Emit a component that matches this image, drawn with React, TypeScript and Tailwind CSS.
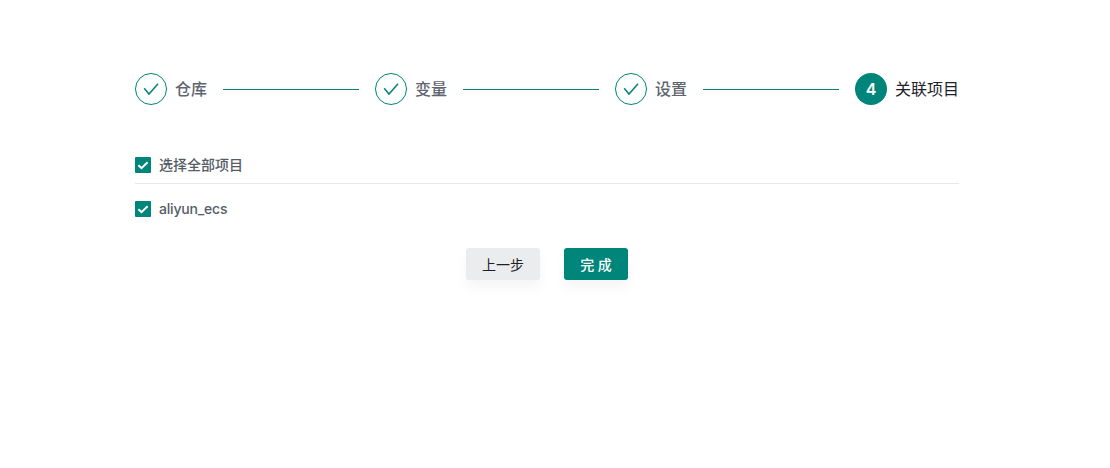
import { Fragment, useState } from 'react';

const steps = ['仓库', '变量', '设置', '关联项目'];
const projects = ['aliyun_ecs'];

function StepCheck() {
  return (
    <svg
      viewBox="0 0 16 16"
      className="size-4"
      fill="none"
      stroke="#00857a"
      strokeWidth="1.5"
      aria-hidden="true"
    >
      <path d="M1.2 7.2 6 13 15 2.7" />
    </svg>
  );
}

function Steps({ current }: { current: number }) {
  return (
    <ol className="flex h-8 items-center">
      {steps.map((label, index) => (
        <Fragment key={label}>
          {index > 0 && <li aria-hidden="true" className="mx-4 h-px flex-1 bg-[#00857a]" />}
          <li className="flex items-center gap-2">
            {index < current ? (
              <span className="flex size-8 items-center justify-center rounded-full border border-[#00857a]">
                <StepCheck />
              </span>
            ) : (
              <span className="flex size-8 items-center justify-center rounded-full bg-[#00857a] font-['Inter'] text-base font-semibold text-white">
                {index + 1}
              </span>
            )}
            <span
              className={
                index < current
                  ? 'text-base leading-8 font-medium text-[#5f6570]'
                  : 'text-base leading-8 text-[#1d2129]'
              }
            >
              {label}
            </span>
          </li>
        </Fragment>
      ))}
    </ol>
  );
}

type CheckboxProps = { label: string; checked: boolean; onChange: () => void };

function Checkbox({ label, checked, onChange }: CheckboxProps) {
  return (
    <label className="flex cursor-pointer items-center gap-2 text-sm leading-[22px] font-medium text-[#555c66]">
      <input type="checkbox" className="sr-only" checked={checked} onChange={onChange} />
      <span
        className={
          checked
            ? 'flex size-4 items-center justify-center rounded-[1px] bg-[#00857a]'
            : 'flex size-4 rounded-[1px] border border-gray-300 bg-white'
        }
      >
        {checked && (
          <svg viewBox="0 0 16 16" className="size-4" fill="none" stroke="white" strokeWidth="2">
            <path d="M3.4 8.2 6.5 11.1 12.6 5.2" />
          </svg>
        )}
      </span>
      <span>{label}</span>
    </label>
  );
}

export default function App() {
  const [selected, setSelected] = useState<string[]>(projects);
  const allSelected = selected.length === projects.length;
  const toggle = (name: string) =>
    setSelected((list) => (list.includes(name) ? list.filter((n) => n !== name) : [...list, name]));

  return (
    <main className="min-h-[468px] bg-white pt-[73px] pl-[135px] font-['Inter','Noto_Sans_CJK_SC',sans-serif]">
      <div className="w-[824px]">
        <Steps current={3} />
        <div className="mt-[49px] border-b border-[#e8e8ea] pb-[7px]">
          <Checkbox
            label="选择全部项目"
            checked={allSelected}
            onChange={() => setSelected(allSelected ? [] : projects)}
          />
        </div>
        <div className="mt-[14px] tracking-[-0.2px]">
          {projects.map((name) => (
            <Checkbox
              key={name}
              label={name}
              checked={selected.includes(name)}
              onChange={() => toggle(name)}
            />
          ))}
        </div>
        <div className="mt-7 flex justify-center gap-6">
          <button className="h-8 w-[74px] rounded-[3px] bg-[#ebecee] pt-0.5 text-sm text-[#1d2129] shadow-[0_8px_12px_rgba(0,0,0,0.04)]">
            上一步
          </button>
          <button className="h-8 w-16 rounded-[3px] bg-[#00857a] pt-0.5 text-sm font-medium text-white shadow-[0_8px_12px_rgba(0,0,0,0.04)]">
            完 成
          </button>
        </div>
      </div>
    </main>
  );
}
